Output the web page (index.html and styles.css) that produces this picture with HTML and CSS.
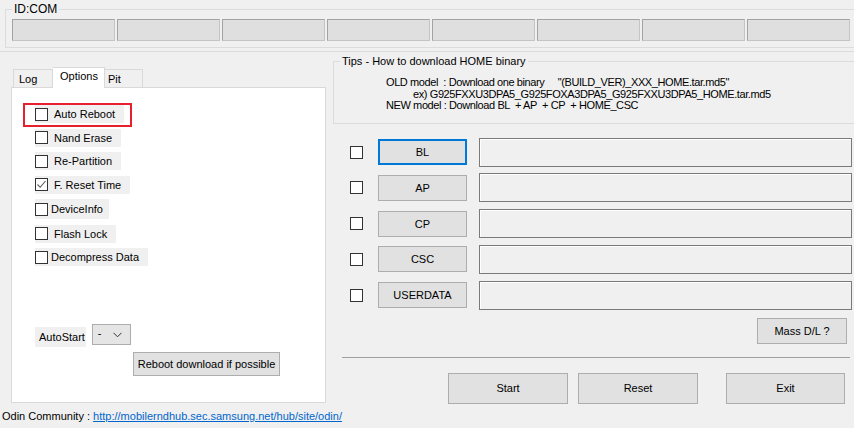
FILE: index.html
```html
<!DOCTYPE html>
<html lang="en">
<head>
    <meta charset="UTF-8">
    <meta name="viewport" content="width=device-width, initial-scale=1.0">
    <title>Odin3</title>
    <link rel="stylesheet" href="styles.css">
</head>
<body>
    <!-- ID:COM slots -->
    <div class="top-bar">
        <fieldset class="group com-group">
            <legend>ID:COM</legend>
            <div class="com-slots">
                <div class="com-slot"></div>
                <div class="com-slot"></div>
                <div class="com-slot"></div>
                <div class="com-slot"></div>
                <div class="com-slot"></div>
                <div class="com-slot"></div>
                <div class="com-slot"></div>
                <div class="com-slot"></div>
            </div>
        </fieldset>
    </div>

    <main class="main">
        <!-- Left: tabs -->
        <section class="left">
            <div class="tabs">
                <div class="tab tab-log">Log</div>
                <div class="tab tab-options active">Options</div>
                <div class="tab tab-pit">Pit</div>
            </div>
            <div class="tab-page">
                <div class="highlight">
                    <label class="opt"><span class="check"></span><span class="opt-text">Auto Reboot</span></label>
                </div>
                <label class="opt"><span class="check"></span><span class="opt-text">Nand Erase</span></label>
                <label class="opt"><span class="check"></span><span class="opt-text">Re-Partition</span></label>
                <label class="opt"><span class="check checked"><svg width="11" height="11" viewBox="0 0 11 11"><polyline points="1.5,5.5 4.2,8.3 9.5,2" fill="none" stroke="#5a5a5a" stroke-width="1.1"/></svg></span><span class="opt-text">F. Reset Time</span></label>
                <label class="opt opt-tight opt-device"><span class="check"></span><span class="opt-text">DeviceInfo</span></label>
                <label class="opt"><span class="check"></span><span class="opt-text">Flash Lock</span></label>
                <label class="opt opt-tight"><span class="check"></span><span class="opt-text">Decompress Data</span></label>

                <div class="autostart">
                    <span class="autostart-label">AutoStart</span>
                    <div class="combo">
                        <span>-</span>
                        <svg width="9" height="6" viewBox="0 0 9 6"><polyline points="0.5,0.8 4.5,4.8 8.5,0.8" fill="none" stroke="#333" stroke-width="1"/></svg>
                    </div>
                </div>
                <button class="btn reboot-btn">Reboot download if possible</button>
            </div>
        </section>

        <!-- Right: tips + files + actions -->
        <section class="right">
            <fieldset class="group tips">
                <legend>Tips - How to download HOME binary</legend>
                <div class="tip-body">
                    <div class="tip-line">OLD model&nbsp; : Download one binary &nbsp;&nbsp;&nbsp;&nbsp;"(BUILD_VER)_XXX_HOME.tar.md5"</div>
                    <div class="tip-line tip-indent">ex) G925FXXU3DPA5_G925FOXA3DPA5_G925FXXU3DPA5_HOME.tar.md5</div>
                    <div class="tip-line">NEW model : Download BL &nbsp;+ AP &nbsp;+ CP &nbsp;+ HOME_CSC</div>
                </div>
            </fieldset>

            <div class="files">
                <div class="file-row">
                    <span class="check"></span>
                    <button class="btn file-btn focused">BL</button>
                    <div class="file-path"></div>
                </div>
                <div class="file-row">
                    <span class="check"></span>
                    <button class="btn file-btn">AP</button>
                    <div class="file-path"></div>
                </div>
                <div class="file-row">
                    <span class="check"></span>
                    <button class="btn file-btn">CP</button>
                    <div class="file-path"></div>
                </div>
                <div class="file-row">
                    <span class="check"></span>
                    <button class="btn file-btn">CSC</button>
                    <div class="file-path"></div>
                </div>
                <div class="file-row">
                    <span class="check"></span>
                    <button class="btn file-btn">USERDATA</button>
                    <div class="file-path"></div>
                </div>
            </div>

            <button class="btn mass-btn">Mass D/L ?</button>
            <div class="separator"></div>

            <div class="actions">
                <button class="btn action-btn start-btn">Start</button>
                <button class="btn action-btn reset-btn">Reset</button>
                <button class="btn action-btn exit-btn">Exit</button>
            </div>
        </section>
    </main>

    <footer class="footer">
        Odin Community : <a href="#">http://mobilerndhub.sec.samsung.net/hub/site/odin/</a>
    </footer>
</body>
</html>
```

FILE: styles.css
```css
body {
  margin: 0;
  padding: 0;
  width: 854px;
  height: 428px;
  overflow: hidden;
  background: #f0f0f0;
  color: #000;
  font-family: "Liberation Sans", Arial, sans-serif;
  font-size: 11px;
}

/* group boxes */
.group {
  border: 1px solid #dcdcdc;
  margin: 0;
  padding: 0;
  min-width: 0;
}

.group legend {
  padding: 0 2px;
  line-height: 14px;
}

/* top ID:COM bar */
.top-bar {
  height: 49px;
  padding-top: 2px;
  border-bottom: 1px solid #dcdcdc;
  overflow: hidden;
}

.com-group {
  margin-left: 5px;
  width: 860px;
  padding: 3px 0 6px 6px;
}

.com-group legend {
  font-size: 12px;
}

.com-slots {
  display: flex;
  gap: 2px;
  width: 838px;
}

.com-slot {
  flex: 1;
  height: 20px;
  background: #dfdfdf;
  border: 1px solid;
  border-color: #a3a3a3 #c4c4c4 #c4c4c4 #a3a3a3;
}

/* main */
.main {
  display: flex;
  height: 352px;
}

.left {
  width: 315px;
  margin: 15px 0 0 11px;
}

.tabs {
  display: flex;
  align-items: flex-end;
  height: 21px;
  margin: 0 0 -1px 2px;
}

.tab {
  box-sizing: border-box;
  height: 18px;
  margin-bottom: 1px;
  padding-left: 5px;
  line-height: 18px;
  border: 1px solid #d9d9d9;
  border-bottom: none;
  background: #f0f0f0;
}

.tab-log { width: 40px; }

.tab-pit { width: 38px; padding-left: 3px; border-left: none; }

.tab-options {
  width: 52px;
  padding-left: 7px;
}

.tab.active {
  position: relative;
  z-index: 1;
  height: 21px;
  margin-bottom: 0;
  line-height: 17px;
  background: #fff;
  border-left: none;
}

.tab-page {
  box-sizing: border-box;
  height: 316px;
  padding: 17px 0 0 23px;
  background: #fff;
  border: 1px solid #d9d9d9;
}

.opt {
  display: flex;
  align-items: center;
  width: fit-content;
  height: 18px;
  padding-right: 9px;
  margin-bottom: 5.5px;
  background: #f0f0f0;
}

.opt-text {
  margin-left: 6px;
}

.opt-tight .opt-text {
  margin-left: 3px;
}

.opt-device {
  height: 20px;
  margin-top: 1px;
  padding-right: 6px;
}

.check {
  display: inline-flex;
  align-items: center;
  justify-content: center;
  box-sizing: border-box;
  width: 13px;
  height: 13px;
  border: 1px solid #333;
  background: #fff;
  flex-shrink: 0;
}

.highlight {
  box-sizing: border-box;
  width: 109px;
  height: 24px;
  margin: -2px 0 1.5px -12px;
  padding-left: 10px;
  border: 2px solid #e8202e;
}

.highlight .opt {
  margin-bottom: 0;
}

.autostart {
  display: flex;
  align-items: flex-start;
  margin-top: 58px;
  height: 23px;
}

.autostart-label {
  display: inline-block;
  height: 20px;
  margin-top: 3px;
  line-height: 20px;
  padding: 0 1px 0 4px;
  background: #f0f0f0;
}

.combo {
  box-sizing: border-box;
  display: flex;
  align-items: center;
  justify-content: space-between;
  width: 39px;
  height: 21px;
  margin-left: 6px;
  padding: 0 8px 0 5px;
  background: #e5e5e5;
  border: 1px solid #adadad;
}

.combo span {
  margin-top: -4px;
}

.btn {
  box-sizing: border-box;
  background: #e1e1e1;
  border: 1px solid #adadad;
  font-family: "Liberation Sans", Arial, sans-serif;
  font-size: 11px;
  color: #000;
  padding: 0;
  white-space: nowrap;
  cursor: pointer;
}

.reboot-btn {
  display: block;
  width: 147px;
  height: 24px;
  margin: 5px 0 0 98px;
}

/* right column */
.right {
  display: flex;
  flex-direction: column;
  width: 521px;
  margin-left: 7px;
  overflow: hidden;
}

.tips {
  flex-shrink: 0;
  margin-top: 2px;
  width: 540px;
  padding: 9px 0 11px 6px;
}

.tip-body {
  padding-left: 46px;
}

.tip-line {
  line-height: 11.5px;
  letter-spacing: -0.4px;
  white-space: nowrap;
}

.tip-indent {
  padding-left: 27px;
}

.files {
  margin-top: 14px;
  padding: 0 2px 0 17px;
}

.file-row {
  display: flex;
  align-items: center;
  height: 29px;
  margin-bottom: 6.75px;
}

.file-row:last-child {
  margin-bottom: 0;
}

.file-btn {
  width: 89px;
  height: 26px;
  margin: 0 12px 0 15px;
}

.file-btn.focused {
  border: 2px solid #0078d7;
}

.file-path {
  flex: 1;
  height: 29px;
  box-sizing: border-box;
  border: 1px solid #7a7a7a;
  box-shadow: inset 1px 1px 0 #fff;
  background: #f0f0f0;
}

.mass-btn {
  flex-shrink: 0;
  align-self: flex-end;
  width: 90px;
  height: 26px;
  margin: 8px 7px 0 0;
}

.separator {
  flex-shrink: 0;
  height: 1px;
  margin: 13px 4px 0 9px;
  background: #a0a0a0;
}

.actions {
  display: flex;
  margin-top: 15px;
}

.action-btn {
  flex-shrink: 0;
  width: 120px;
  height: 31px;
}

.start-btn { margin-left: 115px; }

.reset-btn { margin-left: 10px; }

.exit-btn { margin-left: 28px; width: 119px; }

/* footer */
.footer {
  padding-left: 2px;
  line-height: 24px;
}

.footer a {
  color: #0066cc;
}
```
